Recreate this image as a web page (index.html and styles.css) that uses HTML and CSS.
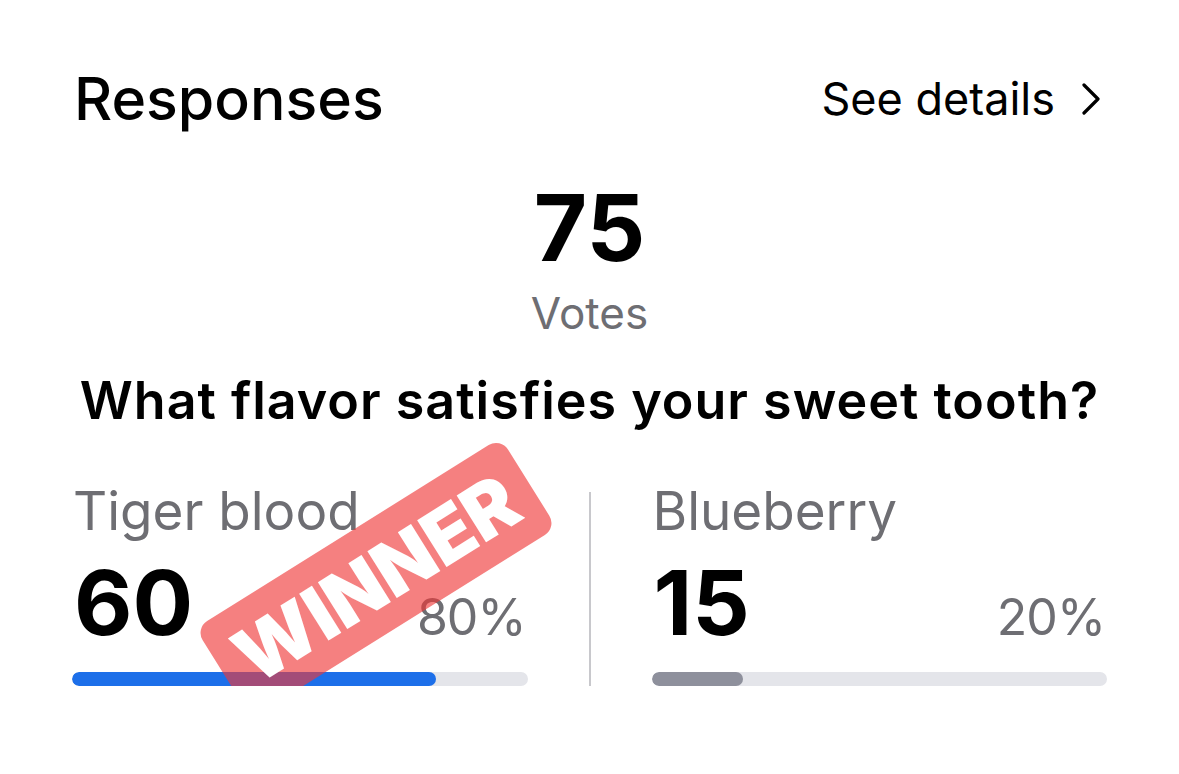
FILE: index.html
```html
<!DOCTYPE html>
<html>
<head>
    <meta charset="UTF-8">
    <title>Responses</title>
    <link rel="stylesheet" href="styles.css">
</head>
<body>
    <div class="card">
        <div class="header">
            <h2>Responses</h2>
            <a class="details-link" href="#">See details
                <svg class="chevron" width="20" height="32" viewBox="0 0 20 32">
                    <path d="M3 2 L17 16 L3 30" fill="none" stroke="#000" stroke-width="3.2" stroke-linecap="round" stroke-linejoin="round"/>
                </svg>
            </a>
        </div>

        <div class="total">
            <div class="total-count">75</div>
            <div class="total-label">Votes</div>
        </div>

        <h3 class="question">What flavor satisfies your sweet tooth?</h3>

        <div class="options">
            <div class="option">
                <div class="option-name">Tiger blood</div>
                <div class="option-stats">
                    <span class="option-votes">60</span>
                    <span class="option-percent">80%</span>
                </div>
                <div class="bar"><div class="bar-fill winner" style="width: 80%;"></div></div>
            </div>

            <div class="divider"></div>

            <div class="option">
                <div class="option-name">Blueberry</div>
                <div class="option-stats">
                    <span class="option-votes">15</span>
                    <span class="option-percent">20%</span>
                </div>
                <div class="bar"><div class="bar-fill" style="width: 20%;"></div></div>
            </div>

            <div class="stamp">WINNER</div>
        </div>
    </div>
</body>
</html>
```

FILE: styles.css
```css
body {
    font-family: Inter, "Liberation Sans", sans-serif;
    margin: 0;
    background: #fff;
    color: #000;
}
.card {
    padding: 69px 72px 0 72px;
}
.header {
    display: flex;
    align-items: center;
    justify-content: space-between;
}
h2 {
    margin: 0;
    font-size: 59px;
    line-height: 59px;
    font-weight: 500;
    padding-left: 2px;
}
.details-link {
    display: flex;
    align-items: center;
    font-size: 45px;
    line-height: 45px;
    color: #000;
    text-decoration: none;
    padding-right: 6px;
}
.chevron {
    margin-left: 26px;
}
.total {
    text-align: center;
    margin-top: 54px;
}
.total-count {
    font-size: 92px;
    line-height: 92px;
    font-weight: 700;
}
.total-label {
    margin-top: 17px;
    font-size: 44px;
    line-height: 44px;
    color: #6e6e73;
}
.question {
    margin: 40px 0 0 0;
    text-align: center;
    font-size: 52px;
    line-height: 52px;
    font-weight: 600;
    letter-spacing: 1px;
}
.options {
    position: relative;
    display: grid;
    grid-template-columns: 1fr 2px 1fr;
    column-gap: 61px;
    margin-top: 58px;
}
.option-name {
    font-size: 53px;
    line-height: 53px;
    color: #6e6e73;
    padding-left: 1px;
}
.option-stats {
    display: flex;
    align-items: baseline;
    justify-content: space-between;
    margin-top: 20px;
    padding-left: 2px;
}
.option-votes {
    font-size: 90px;
    line-height: 90px;
    font-weight: 700;
}
.option-percent {
    font-size: 50px;
    line-height: 50px;
    color: #6e6e73;
    letter-spacing: -1px;
    padding-right: 2px;
}
.bar {
    margin-top: 24px;
    height: 14px;
    border-radius: 7px;
    background: #e4e5ea;
    overflow: hidden;
}
.bar-fill {
    height: 100%;
    border-radius: 7px;
    background: #8e909c;
}
.bar-fill.winner {
    background: #1d6fe9;
}
.divider {
    margin-top: 7px;
    background: #c8c8cc;
}
.stamp {
    position: absolute;
    left: 124px;
    top: 40px;
    width: 360px;
    height: 106px;
    border-radius: 14px;
    background: rgba(240, 56, 56, 0.64);
    color: #fff;
    font-size: 76px;
    font-weight: 900;
    line-height: 106px;
    text-align: center;
    transform: rotate(-32deg);
}
```
